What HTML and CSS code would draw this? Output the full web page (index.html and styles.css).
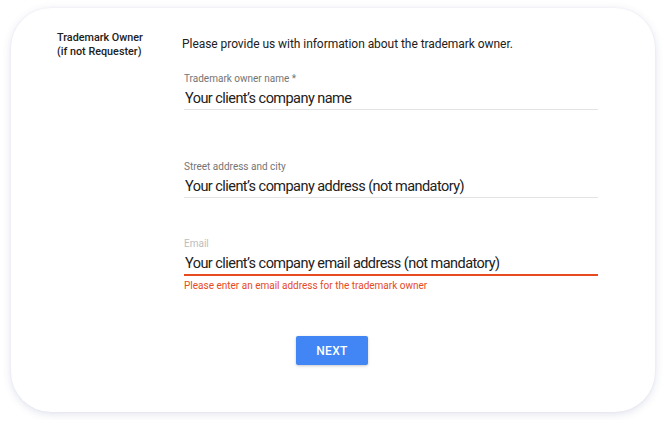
FILE: index.html
```html
<!DOCTYPE html>
<html lang="en">
<head>
<meta charset="utf-8">
<title>Trademark Owner</title>
<link rel="stylesheet" href="styles.css">
</head>
<body>
<div class="card">
  <div class="grid">
    <div class="side-title">Trademark Owner<br>(if not Requester)</div>
    <div class="main">
      <p class="intro">Please provide us with information about the trademark owner.</p>
      <div class="field field-first">
        <div class="label">Trademark owner name *</div>
        <div class="input">Your client’s company name</div>
      </div>
      <div class="field field-second">
        <div class="label">Street address and city</div>
        <div class="input">Your client’s company address (not mandatory)</div>
      </div>
      <div class="field field-third field-error">
        <div class="label label-muted">Email</div>
        <div class="input">Your client’s company email address (not mandatory)</div>
        <div class="error">Please enter an email address for the trademark owner</div>
      </div>
    </div>
  </div>
  <div class="actions">
    <button class="btn" type="button">NEXT</button>
  </div>
</div>
</body>
</html>
```

FILE: styles.css
```css
html, body {
  margin: 0;
  padding: 0;
  background: #ffffff;
}
body {
  font-family: Roboto, "Noto Sans", Arial, sans-serif;
  color: #212121;
  padding: 8px 11px;
}
.card {
  width: 644px;
  height: 404px;
  box-sizing: border-box;
  background: #ffffff;
  border-radius: 40px;
  box-shadow: 0 2px 8px rgba(70, 80, 140, 0.16), 0 0 2px rgba(70, 80, 140, 0.08);
  padding-top: 23px;
}
.grid {
  display: grid;
  grid-template-columns: 125px 416px;
  padding-left: 46px;
}
.side-title {
  font-size: 10.8px;
  font-weight: 500;
  line-height: 14px;
  color: #212121;
}
.main {
  display: flex;
  flex-direction: column;
}
.intro {
  margin: 5px 0 0 0;
  font-size: 12px;
  letter-spacing: -0.05px;
  line-height: 16px;
  color: #212121;
}
.field {
  display: flex;
  flex-direction: column;
  margin-left: 2px;
  width: 414px;
}
.field-first { margin-top: 21px; }
.field-second { margin-top: 51px; }
.field-third { margin-top: 40px; }
.label {
  font-size: 10px;
  line-height: 12px;
  color: #757575;
  margin-bottom: 4px;
}
.label-muted { color: #bdbdbd; }
.input {
  font-size: 14.5px;
  letter-spacing: -0.55px;
  line-height: 20px;
  color: #212121;
  padding-left: 1px;
  border-bottom: 1px solid #e3e3e3;
}
.field-error .input {
  border-bottom: 2px solid #e64a1e;
}
.error {
  margin-top: 4px;
  font-size: 10px;
  line-height: 12px;
  color: #e64a1e;
}
.actions {
  display: flex;
  justify-content: center;
  margin-top: 44px;
  padding-right: 2px;
}
.btn {
  width: 72px;
  height: 29px;
  border: none;
  border-radius: 2px;
  background: #4285f4;
  color: #ffffff;
  font-family: Roboto, "Noto Sans", Arial, sans-serif;
  font-size: 12px;
  font-weight: 500;
  letter-spacing: 0.3px;
  box-shadow: 0 1px 3px rgba(0, 0, 0, 0.22);
  padding: 0;
}
```
